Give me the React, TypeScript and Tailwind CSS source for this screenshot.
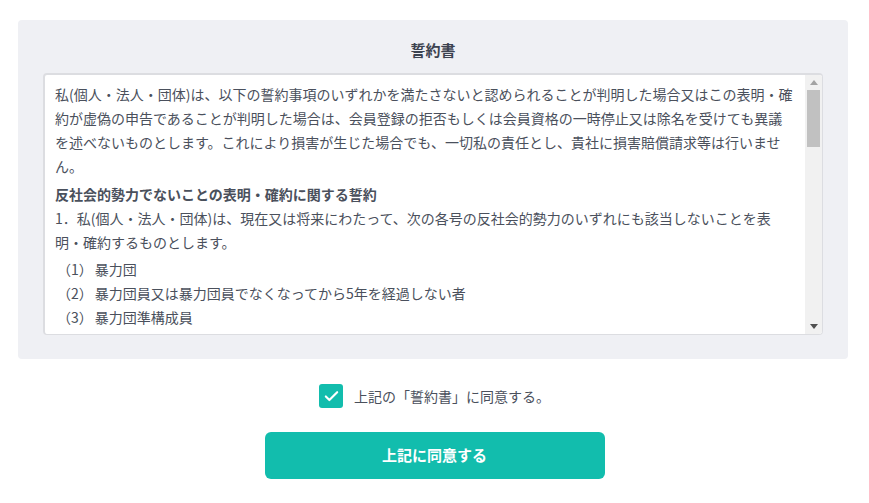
import { Check } from 'lucide-react';
import { useState } from 'react';

const items = [
  '暴力団',
  '暴力団員又は暴力団員でなくなってから5年を経過しない者',
  '暴力団準構成員',
  '暴力団関係企業',
  '総会屋等、社会運動等標ぼうゴロ又は特殊知能暴力集団等',
  '前各号の共生者',
  'その他前各号に準ずる者',
];

const items2 = [
  '暴力団員等が経営を支配していると認められる関係を有すること',
  '暴力団員等が経営に実質的に関与していると認められる関係を有すること',
  '自己、自社若しくは第三者の不正の利益を図る目的又は第三者に損害を加える目的をもってするなど、不当に暴力団員等を利用していると認められる関係を有すること',
  '暴力団員等に対して資金等を提供し、又は便宜を供与するなどの関与をしていると認められる関係を有すること',
  '役員又は経営に実質的に関与している者が暴力団員等と社会的に非難されるべき関係を有すること',
];

const items3 = [
  '暴力的な要求行為',
  '法的な責任を超えた不当な要求行為',
  '取引に関して、脅迫的な言動をし、又は暴力を用いる行為',
  '風説を流布し、偽計を用い又は威力を用いて貴社の信用を毀損し、又は貴社の業務を妨害する行為',
  'その他前各号に準ずる行為',
];

function ItemList({ list }: { list: string[] }) {
  return (
    <ul className="mt-[3px] pl-[2px]">
      {list.map((t, i) => (
        <li key={t} className="flex">
          <span className="mr-[2px] shrink-0">（{i + 1}）</span>
          <span>{t}</span>
        </li>
      ))}
    </ul>
  );
}

function FakeScrollbar() {
  return (
    <div className="flex w-[17px] shrink-0 flex-col bg-[#f1f1f1]">
      <div className="flex h-[15px] items-center justify-center">
        <svg width="8" height="5" viewBox="0 0 8 5">
          <path d="M4 0L8 5H0z" fill="#a3a3a3" />
        </svg>
      </div>
      <div className="flex-1 px-[2px]">
        <div className="h-[57px] bg-[#c1c1c1]" />
      </div>
      <div className="flex h-[15px] items-center justify-center">
        <svg width="8" height="5" viewBox="0 0 8 5">
          <path d="M0 0H8L4 5z" fill="#505050" />
        </svg>
      </div>
    </div>
  );
}

export default function App() {
  const [agreed, setAgreed] = useState(true);

  return (
    <div
      className="flex min-h-[503px] flex-col items-center bg-white pt-5 text-[#4a505c]"
      style={{ fontFamily: '"Noto Sans CJK JP", "Noto Sans", sans-serif' }}
    >
      <div className="ml-[18px] flex w-[830px] flex-col self-start rounded bg-[#eff0f4] px-[25px] pb-6 pt-[18px]">
        <h2 className="mb-[11px] text-center text-[15px] font-bold leading-[24px] text-[#3d4350]">誓約書</h2>
        <div className="flex h-[262px] overflow-hidden rounded-sm border border-l-2 border-t-2 border-[#dcdde1] bg-white">
          <div className="flex-1 overflow-y-auto pb-[10px] pl-[10px] pr-[10px] pt-[7px] text-[14px] leading-[24px] [scrollbar-width:none]">
            <p>
              私(個人・法人・団体)は、以下の誓約事項のいずれかを満たさないと認められることが判明した場合又はこの表明・確約が虚偽の申告であることが判明した場合は、会員登録の拒否もしくは会員資格の一時停止又は除名を受けても異議を述べないものとします。これにより損害が生じた場合でも、一切私の責任とし、貴社に損害賠償請求等は行いません。
            </p>
            <p className="mt-[4px] font-bold">反社会的勢力でないことの表明・確約に関する誓約</p>
            <p>
              1．私(個人・法人・団体)は、現在又は将来にわたって、次の各号の反社会的勢力のいずれにも該当しないことを表明・確約するものとします。
            </p>
            <ItemList list={items} />
            <p className="mt-[3px]">
              2．私(個人・法人・団体)は、現在又は将来にわたって、前項の反社会的勢力又は反社会的勢力と密接な交友関係にある者（以下「反社会的勢力等」という。）と次の各号のいずれかに該当する関係がないことを表明・確約するものとします。
            </p>
            <ItemList list={items2} />
            <p className="mt-[3px]">
              3．私(個人・法人・団体)は、自ら又は第三者を利用して次の各号のいずれかに該当する行為を行わないことを表明・確約するものとします。
            </p>
            <ItemList list={items3} />
            <p className="mt-[3px]">
              4．私(個人・法人・団体)は、前各項のいずれかに違反したことが判明した場合には、貴社から何らの催告を要せずして会員登録を抹消されても一切異議を申し立てず、また、これにより損害が生じた場合でも、貴社に対して一切の請求を行わないものとします。
            </p>
          </div>
          <FakeScrollbar />
        </div>
      </div>

      <label className="mt-[25px] flex cursor-pointer items-center gap-[11px] text-[14px]">
        <button
          type="button"
          onClick={() => setAgreed(!agreed)}
          className={
            agreed
              ? 'flex h-6 w-6 items-center justify-center rounded-[3px] bg-[#12bdad] text-white'
              : 'flex h-6 w-6 items-center justify-center rounded-[3px] border border-[#cfd2d8] bg-white text-transparent'
          }
        >
          <Check className="h-[17px] w-[17px]" strokeWidth={3} />
        </button>
        <span className="text-[#4a505c]">上記の「誓約書」に同意する。</span>
      </label>

      <button
        type="button"
        className="mt-6 h-[47px] w-[340px] rounded-md bg-[#12bdad] text-[15px] font-bold text-white"
      >
        上記に同意する
      </button>
    </div>
  );
}
